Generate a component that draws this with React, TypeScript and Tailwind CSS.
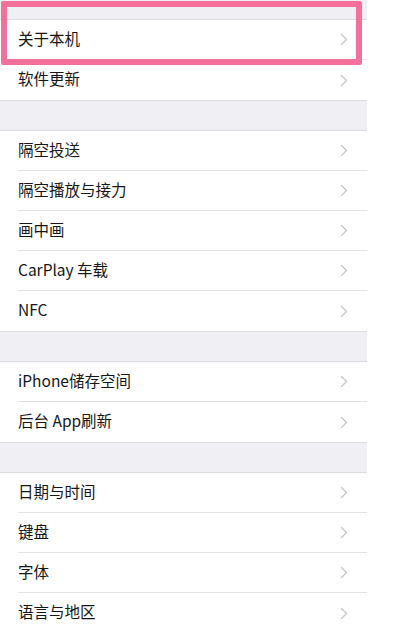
import { Fragment } from 'react';

const groups: string[][] = [
  ['关于本机', '软件更新'],
  ['隔空投送', '隔空播放与接力', '画中画', 'CarPlay 车载', 'NFC'],
  ['iPhone储存空间', '后台 App刷新'],
  ['日期与时间', '键盘', '字体', '语言与地区'],
];

function Chevron() {
  return (
    <svg width="8" height="13" viewBox="0 0 8 13" className="shrink-0">
      <path d="M1.5 1.5 L6.5 6.5 L1.5 11.5" fill="none" stroke="#c7c7cc" strokeWidth="1.4" strokeLinecap="round" strokeLinejoin="round" />
    </svg>
  );
}

export default function App() {
  return (
    <div
      className="relative w-[400px] h-[629px] overflow-hidden bg-white"
      style={{ fontFamily: '"Noto Sans CJK SC", "Liberation Sans", sans-serif' }}
    >
      <div className="w-[367px] bg-[#efeff4]">
        {groups.map((items, gi) => (
          <Fragment key={gi}>
            {/* 分组间隔 */}
            <div className={gi === 0 ? 'h-[19px]' : 'h-[29px]'} />
            <div className="bg-white border-y border-[#dcdce1]">
              {items.map((label, i) => (
                <div key={label} className="pl-[18px]">
                  <div
                    className={`flex items-center justify-between h-[40px] pr-[19px] ${
                      i < items.length - 1 ? 'border-b border-[#e3e3e7]' : ''
                    }`}
                  >
                    <span className="text-[15.5px] text-[#161618] leading-none pb-[2px]">{label}</span>
                    <Chevron />
                  </div>
                </div>
              ))}
            </div>
          </Fragment>
        ))}
      </div>

      {/* 标注框 */}
      <div className="absolute left-[1px] top-[1px] w-[361px] h-[64px] border-[6px] border-[#f2709a] rounded-[2px]" />
    </div>
  );
}
